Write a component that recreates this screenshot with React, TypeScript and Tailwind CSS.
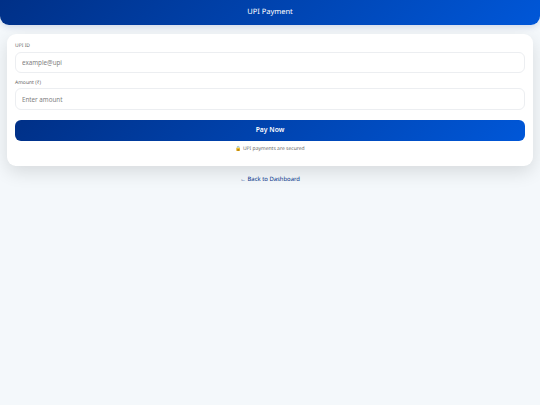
import React from 'react';

const App: React.FC = () => {
  return (
    <div className="min-h-[405px] bg-[#f4f8fb] font-['Noto_Sans',sans-serif] [text-rendering:geometricPrecision]">
      <header className="h-[25px] flex items-center justify-center rounded-b-[9px] bg-[linear-gradient(135deg,#003087,#0057d8)] text-white text-[7.5px] shadow-[0_2px_6px_rgba(0,48,135,0.15)]">
        UPI Payment
      </header>

      <div className="mx-[7px] mt-[9px] h-[132px] bg-white rounded-[9px] px-[8px] pt-[8px] shadow-[0_6px_18px_rgba(0,0,0,0.12)]">
        <label className="block text-[5px] leading-[8px] text-[#666] mb-[2px]">UPI ID</label>
        <input
          placeholder="example@upi"
          className="block w-full h-[21px] px-[6px] border border-[#eceef1] rounded-[6px] text-[6.25px] text-[#333] placeholder:text-[#808080] outline-none"
        />

        <label className="block text-[5px] leading-[8px] text-[#666] mt-[6px] mb-[1px]">Amount (₹)</label>
        <input
          placeholder="Enter amount"
          className="block w-full h-[22px] px-[6px] border border-[#eceef1] rounded-[6px] text-[6.25px] text-[#333] placeholder:text-[#808080] outline-none"
        />

        <button className="block w-full h-[21px] mt-[10px] rounded-[6px] bg-[linear-gradient(135deg,#003087,#0057d8)] text-white text-[6.75px] font-semibold">
          Pay Now
        </button>

        <p className="mt-[4px] text-center text-[5px] leading-[9px] text-[#666]">🔒 UPI payments are secured</p>
      </div>

      <div className="mt-[8px] text-center text-[5.9px] leading-[10px] text-[#003087]">
        <a href="#">← Back to Dashboard</a>
      </div>
    </div>
  );
};

export default App;
